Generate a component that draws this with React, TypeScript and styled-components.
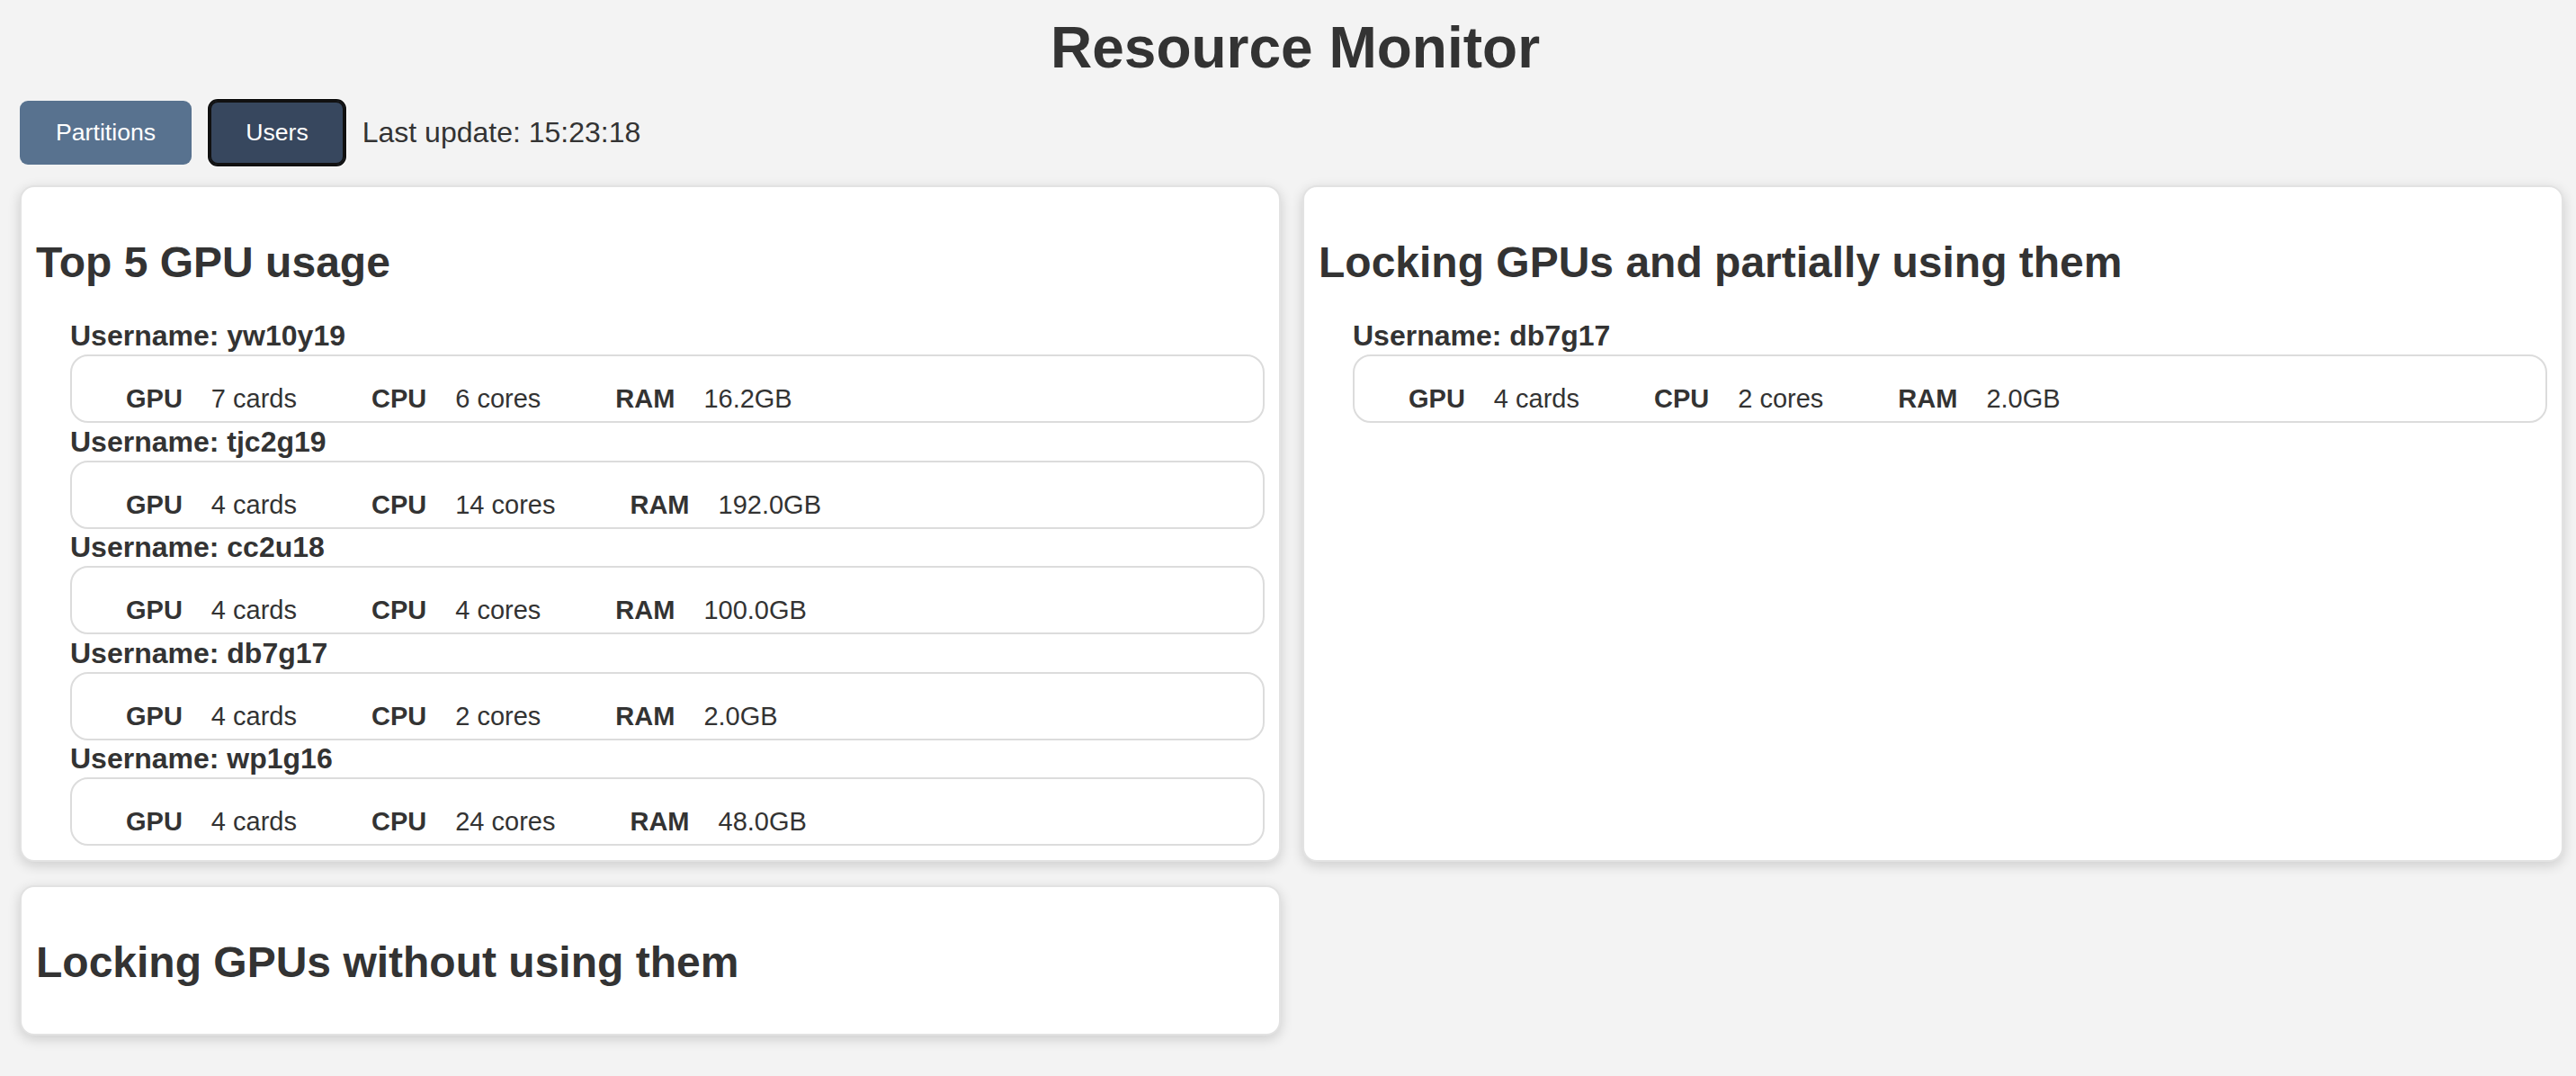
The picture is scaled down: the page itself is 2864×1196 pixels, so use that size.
import React from "react";
import styled, { createGlobalStyle } from "styled-components";

const GlobalStyle = createGlobalStyle`
  html, body {
    margin: 0;
    padding: 0;
    background: #f3f3f3;
  }
  body {
    font-family: "Liberation Sans", Arial, Helvetica, sans-serif;
    color: #333333;
  }
  * { box-sizing: border-box; }
`;

const Page = styled.div`
  padding: 16px 14px 40px 22px;
`;

const Title = styled.h1`
  margin: 0 0 22px;
  padding-left: 8px;
  font-size: 64px;
  font-weight: 700;
  line-height: normal;
  text-align: center;
  color: #333333;
`;

const Toolbar = styled.div`
  display: flex;
  align-items: center;
  gap: 20px;
  margin-bottom: 23px;
`;

const TabButton = styled.button<{ $active?: boolean }>`
  font-family: "Liberation Sans", Arial, sans-serif;
  font-size: 26.67px;
  line-height: normal;
  padding: 20px 40px;
  border: none;
  border-radius: 9px;
  color: #ffffff;
  cursor: pointer;
  background: ${(p) => (p.$active ? "#37475e" : "#58728f")};
  box-shadow: ${(p) =>
    p.$active
      ? "inset 0 0 0 2px #111111, 0 0 0 2px #111111, 0 0 0 3px #ffffff"
      : "none"};
`;

const UpdateText = styled.span`
  font-size: 32px;
  color: #333333;
`;

const Grid = styled.div`
  display: grid;
  grid-template-columns: 1fr 1fr;
  column-gap: 24px;
  row-gap: 26px;
  align-items: stretch;
`;

const Card = styled.section`
  background: #ffffff;
  border: 2px solid #e2e2e2;
  border-radius: 16px;
  padding: 16px;
  box-shadow: 0 4px 14px rgba(0, 0, 0, 0.16);
`;

const CardTitle = styled.h2`
  margin: 40px 0 36px;
  font-size: 48px;
  font-weight: 700;
  line-height: normal;
  color: #333333;
`;

const UserList = styled.div`
  padding-left: 38px;
  margin-top: 2px;
`;

const UserItem = styled.div`
  display: flex;
  flex-direction: column;
`;

const Username = styled.div`
  font-size: 32px;
  font-weight: 700;
  line-height: 37px;
  color: #333333;
`;

const StatRow = styled.div<{ $last?: boolean }>`
  display: flex;
  align-items: baseline;
  border: 2px solid #dcdcdc;
  border-radius: 20px;
  padding: 31px 60px 8px;
  margin: 2px 0 ${(p) => (p.$last ? "0" : "2.5px")};
  font-size: 29px;
  line-height: 33px;
  color: #333333;
`;

const Stat = styled.div`
  display: flex;
  align-items: baseline;
  margin-right: 83px;
`;

const StatLabel = styled.span`
  font-weight: 700;
  margin-right: 32px;
`;

const StatValue = styled.span`
  font-weight: 400;
`;

type User = { name: string; gpu: number; cpu: number; ram: string };

const topUsers: User[] = [
  { name: "yw10y19", gpu: 7, cpu: 6, ram: "16.2GB" },
  { name: "tjc2g19", gpu: 4, cpu: 14, ram: "192.0GB" },
  { name: "cc2u18", gpu: 4, cpu: 4, ram: "100.0GB" },
  { name: "db7g17", gpu: 4, cpu: 2, ram: "2.0GB" },
  { name: "wp1g16", gpu: 4, cpu: 24, ram: "48.0GB" },
];

const partialUsers: User[] = [{ name: "db7g17", gpu: 4, cpu: 2, ram: "2.0GB" }];

function Users({ users }: { users: User[] }) {
  return (
    <UserList>
      {users.map((u, i) => (
        <UserItem key={u.name + i}>
          <Username>Username: {u.name}</Username>
          <StatRow $last={i === users.length - 1}>
            <Stat>
              <StatLabel>GPU</StatLabel>
              <StatValue>{u.gpu} cards</StatValue>
            </Stat>
            <Stat>
              <StatLabel>CPU</StatLabel>
              <StatValue>{u.cpu} cores</StatValue>
            </Stat>
            <Stat>
              <StatLabel>RAM</StatLabel>
              <StatValue>{u.ram}</StatValue>
            </Stat>
          </StatRow>
        </UserItem>
      ))}
    </UserList>
  );
}

export default function App() {
  return (
    <>
      <GlobalStyle />
      <Page>
        <Title>Resource Monitor</Title>
        <Toolbar>
          <TabButton>Partitions</TabButton>
          <TabButton $active>Users</TabButton>
          <UpdateText>Last update: 15:23:18</UpdateText>
        </Toolbar>
        <Grid>
          <Card>
            <CardTitle>Top 5 GPU usage</CardTitle>
            <Users users={topUsers} />
          </Card>
          <Card>
            <CardTitle>Locking GPUs and partially using them</CardTitle>
            <Users users={partialUsers} />
          </Card>
          <Card>
            <CardTitle>Locking GPUs without using them</CardTitle>
          </Card>
        </Grid>
      </Page>
    </>
  );
}
